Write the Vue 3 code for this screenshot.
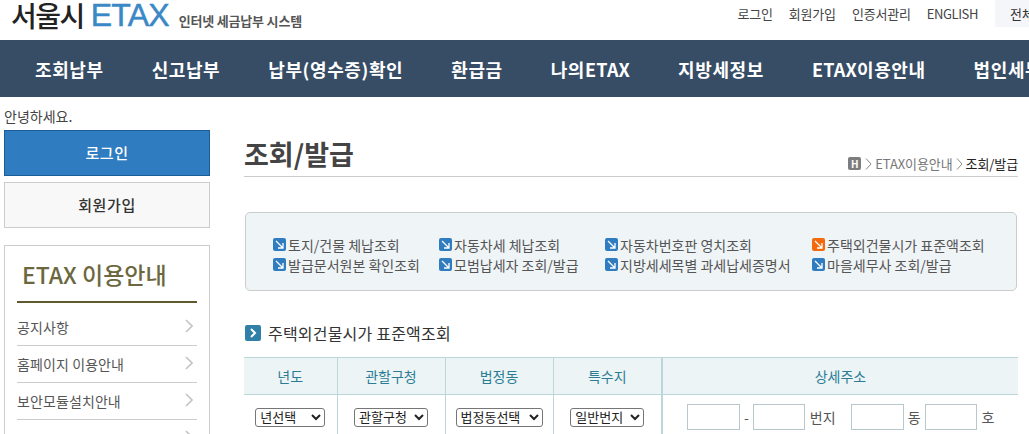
<template>
  <div class="page">
    <header class="top">
      <div class="logo">
        <span class="logo-city">서울시</span>
        <span class="logo-etax">ETAX</span>
        <span class="logo-sub">인터넷 세금납부 시스템</span>
      </div>
      <div class="top-right">
        <a v-for="link in topLinks" :key="link" class="top-link">{{ link }}</a>
        <div class="search-box">전체</div>
      </div>
    </header>

    <nav class="gnb">
      <a v-for="item in navItems" :key="item.ko" class="gnb-item">
        <span v-if="item.before">{{ item.before }}</span><span v-if="item.en" class="latin">{{ item.en }}</span><span>{{ item.ko }}</span>
      </a>
    </nav>

    <div class="body">
      <aside class="side">
        <p class="hello">안녕하세요.</p>
        <button class="btn-login">로그인</button>
        <button class="btn-join">회원가입</button>
        <div class="side-box">
          <h2 class="side-title">ETAX 이용안내</h2>
          <ul class="side-menu">
            <li v-for="(menu, idx) in sideMenus" :key="idx">
              <span>{{ menu }}</span>
              <svg class="side-arrow" width="8" height="14" viewBox="0 0 8 14">
                <path d="M1 1l6 6-6 6" fill="none" stroke="#c4c4c4" stroke-width="1.6" />
              </svg>
            </li>
          </ul>
        </div>
      </aside>

      <main class="content">
        <div class="title-row">
          <h1>조회/발급</h1>
          <div class="crumb">
            <span class="crumb-home">H</span>
            <svg class="crumb-sep" width="7" height="12" viewBox="0 0 7 12">
              <path d="M1 .5l5 5.5-5 5.5" fill="none" stroke="#888" />
            </svg>
            <span>ETAX이용안내</span>
            <svg class="crumb-sep" width="7" height="12" viewBox="0 0 7 12">
              <path d="M1 .5l5 5.5-5 5.5" fill="none" stroke="#888" />
            </svg>
            <strong>조회/발급</strong>
          </div>
        </div>

        <div class="link-box">
          <a v-for="link in boxLinks" :key="link.text" class="box-link">
            <svg class="box-icon" width="13" height="13" viewBox="0 0 13 13">
              <rect width="13" height="13" rx="2" :fill="link.active ? '#f26a0c' : '#2f7cc1'" />
              <path d="M3 3l7 7M10 5v5H5" fill="none" stroke="#fff" stroke-width="1.3" />
            </svg>
            <span>{{ link.text }}</span>
          </a>
        </div>

        <h3 class="section-title">
          <svg width="16" height="16" viewBox="0 0 16 16">
            <rect width="16" height="16" rx="2" fill="#2f7fa8" />
            <path d="M6 4l4 4-4 4" fill="none" stroke="#fff" stroke-width="2" />
          </svg>
          <span>주택외건물시가 표준액조회</span>
        </h3>

        <table class="search-table">
          <colgroup>
            <col style="width: 93px" />
            <col style="width: 108px" />
            <col style="width: 108px" />
            <col style="width: 109px" />
            <col />
          </colgroup>
          <thead>
            <tr>
              <th>년도</th>
              <th>관할구청</th>
              <th>법정동</th>
              <th>특수지</th>
              <th class="thick">상세주소</th>
            </tr>
          </thead>
          <tbody>
            <tr>
              <td><select class="sel-year"><option>년선택</option></select></td>
              <td><select class="sel-gu"><option>관할구청</option></select></td>
              <td><select class="sel-dong"><option>법정동선택</option></select></td>
              <td><select class="sel-bunji"><option>일반번지</option></select></td>
              <td class="thick">
                <div class="addr">
                  <input type="text" class="wide" />
                  <span class="dash">-</span>
                  <input type="text" />
                  <span>번지</span>
                  <input type="text" class="wide gap-left" />
                  <span class="tight">동</span>
                  <input type="text" />
                  <span>호</span>
                </div>
              </td>
            </tr>
          </tbody>
        </table>
      </main>
    </div>
  </div>
</template>

<script setup>
const topLinks = ['로그인', '회원가입', '인증서관리', 'ENGLISH']

const navItems = [
  { ko: '조회납부' },
  { ko: '신고납부' },
  { ko: '납부(영수증)확인' },
  { ko: '환급금' },
  { before: '나의', en: 'ETAX', ko: '' },
  { ko: '지방세정보' },
  { en: 'ETAX', ko: '이용안내' },
  { ko: '법인세무' }
]

// 마지막 항목은 화면 아래로 잘려 화살표만 보인다
const sideMenus = ['공지사항', '홈페이지 이용안내', '보안모듈설치안내', '']

const boxLinks = [
  { text: '토지/건물 체납조회' },
  { text: '자동차세 체납조회' },
  { text: '자동차번호판 영치조회' },
  { text: '주택외건물시가 표준액조회', active: true },
  { text: '발급문서원본 확인조회' },
  { text: '모범납세자 조회/발급' },
  { text: '지방세세목별 과세납세증명서' },
  { text: '마을세무사 조회/발급' }
]
</script>

<style>
html,
body {
  margin: 0;
  height: 434px;
  overflow: hidden;
  background: #fff;
}
</style>

<style scoped>
.page {
  width: 1029px;
  height: 434px;
  overflow: hidden;
  font-family: "Noto Sans CJK KR", "Liberation Sans", sans-serif;
  color: #555;
}

.top {
  display: flex;
  justify-content: space-between;
  height: 40px;
}

.logo {
  display: flex;
  align-items: center;
  padding-left: 11px;
  white-space: nowrap;
  height: 30px;
}

.logo-city {
  font-size: 28px;
  font-weight: 500;
  color: #222;
  letter-spacing: -1.5px;
  line-height: 30px;
}

.logo-etax {
  font-family: "Liberation Sans", sans-serif;
  font-size: 32px;
  color: #3a88c5;
  -webkit-text-stroke: 0.5px #3a88c5;
  letter-spacing: -0.8px;
  line-height: 30px;
  margin-left: 7px;
}

.logo-sub {
  font-size: 13px;
  font-weight: 700;
  color: #555;
  letter-spacing: -0.2px;
  margin: 10px 0 0 10px;
}

.top-right {
  display: flex;
  height: 27px;
  align-items: center;
  white-space: nowrap;
}

.top-link {
  font-size: 13px;
  letter-spacing: -0.2px;
  color: #444;
  margin-right: 16px;
}

.top-link:last-of-type {
  letter-spacing: -0.4px;
}

.search-box {
  width: 34px;
  height: 27px;
  margin-left: 1px;
  padding-left: 15px;
  box-sizing: border-box;
  background: #f5f6fa;
  font-size: 13px;
  color: #333;
  line-height: 27px;
  overflow: hidden;
  flex-shrink: 0;
}

.gnb {
  display: flex;
  gap: 48px;
  height: 57px;
  align-items: center;
  padding-left: 35px;
  background: #374d66;
  white-space: nowrap;
  overflow: hidden;
}

.gnb-item {
  font-size: 18px;
  font-weight: 700;
  letter-spacing: 0.6px;
  color: #fff;
  flex-shrink: 0;
}

.gnb-item .latin {
  letter-spacing: 0.2px;
}

.body {
  display: flex;
  gap: 34px;
  padding-left: 4px;
}

.side {
  width: 206px;
  flex-shrink: 0;
}

.hello {
  margin: 0;
  height: 33px;
  padding-top: 11px;
  box-sizing: border-box;
  font-size: 14px;
  line-height: 16px;
  color: #444;
}

.btn-login,
.btn-join {
  display: block;
  width: 206px;
  height: 46px;
  font-family: inherit;
  font-size: 15px;
  font-weight: 500;
  letter-spacing: 0.6px;
  padding: 0 0 2px;
}

.btn-login {
  background: #2f7cc1;
  border: 1px solid #1b5d96;
  color: #fff;
}

.btn-join {
  margin-top: 6px;
  background: #f8f8f8;
  border: 1px solid #ccc;
  color: #333;
}

.side-box {
  margin-top: 17px;
  height: 240px;
  box-sizing: border-box;
  border: 1px solid #ccc;
  padding: 0 12px;
}

.side-title {
  margin: 0;
  height: 57px;
  padding: 13px 0 0 5px;
  box-sizing: border-box;
  border-bottom: 2px solid #5f5a2e;
  font-size: 23px;
  font-weight: 500;
  line-height: 30px;
  color: #6b6840;
}

.side-menu {
  list-style: none;
  margin: 0;
  padding: 6px 0 0;
}

.side-menu li {
  display: flex;
  justify-content: space-between;
  align-items: center;
  height: 36px;
  border-bottom: 1px solid #ccc;
  font-size: 14px;
  letter-spacing: 0.1px;
  color: #555;
}

.side-arrow {
  margin: -3px 4px 0 auto;
}

.content {
  width: 774px;
  flex-shrink: 0;
}

.title-row {
  display: flex;
  justify-content: space-between;
  align-items: flex-end;
  height: 80px;
  box-sizing: border-box;
  border-bottom: 1px solid #ccc;
  padding-bottom: 3px;
}

.title-row h1 {
  margin: 0 0 -1px;
  font-size: 27px;
  font-weight: 700;
  line-height: 40px;
  color: #444;
}

.crumb {
  display: flex;
  align-items: center;
  gap: 3px;
  font-size: 13px;
  color: #777;
  letter-spacing: -0.1px;
}

.crumb-home {
  width: 13px;
  height: 13px;
  margin-right: 1px;
  border-radius: 2px;
  background: #7d7d7d;
  color: #fff;
  font-size: 10px;
  font-weight: 700;
  line-height: 13px;
  text-align: center;
}

.crumb strong {
  font-weight: 400;
  color: #222;
}

.link-box {
  display: grid;
  grid-template-columns: 166px 166px 207px 1fr;
  grid-auto-rows: 20px;
  margin: 35px 1px 0;
  height: 79px;
  box-sizing: border-box;
  padding: 22px 0 0 27px;
  border: 1px solid #ccc;
  border-radius: 5px;
  background: #eff4f7;
}

.box-link {
  display: flex;
  align-items: center;
  gap: 2px;
  font-size: 14px;
  white-space: nowrap;
  color: #555;
}

.box-icon {
  flex-shrink: 0;
  margin-top: -1px;
}

.section-title {
  display: flex;
  align-items: center;
  gap: 7px;
  margin: 31px 1px 0;
  height: 22px;
  font-size: 16px;
  font-weight: 400;
  letter-spacing: 0.2px;
  color: #333;
}

.search-table {
  width: 774px;
  margin-top: 13px;
  table-layout: fixed;
  border-collapse: collapse;
}

.search-table th {
  height: 36px;
  padding: 0;
  background: #ecf4f6;
  border-top: 1px solid #bcd7dc;
  border-bottom: 1px solid #bcd7dc;
  border-left: 1px solid #bcd7dc;
  font-size: 14px;
  font-weight: 400;
  color: #2b7c94;
}

.search-table td {
  height: 45px;
  padding: 0;
  border-left: 1px solid #bcd7dc;
  text-align: center;
  vertical-align: top;
}

.search-table td:not(.thick) {
  padding-top: 13px;
}

.search-table th:first-child,
.search-table td:first-child {
  border-left: 0;
}

.search-table .thick {
  border-left: 2px solid #bcd7dc;
}

select {
  display: inline-block;
  height: 19px;
  box-sizing: border-box;
  padding: 0;
  font-family: "Liberation Sans", "Noto Sans CJK KR", sans-serif;
  font-size: 13px;
  background: #fff;
  color: #222;
  border: 1px solid #767676;
  border-radius: 3px;
  vertical-align: top;
}

.sel-year {
  width: 70px;
}

.sel-gu {
  width: 74px;
}

.sel-dong {
  width: 87px;
}

.sel-bunji {
  width: 74px;
}

.addr {
  display: flex;
  align-items: center;
  gap: 5px;
  padding: 9px 0 0 24px;
  font-size: 14px;
  color: #555;
}

.addr input {
  width: 52px;
  height: 26px;
  box-sizing: border-box;
  padding: 0;
  border: 1px solid #b8c8cc;
  background: #fff;
}

.addr .wide {
  width: 53px;
}

.addr .dash {
  margin: 0 -1px;
}

.addr .gap-left {
  margin-left: 10px;
}

.addr .tight {
  margin: 0 -1px;
}
</style>
